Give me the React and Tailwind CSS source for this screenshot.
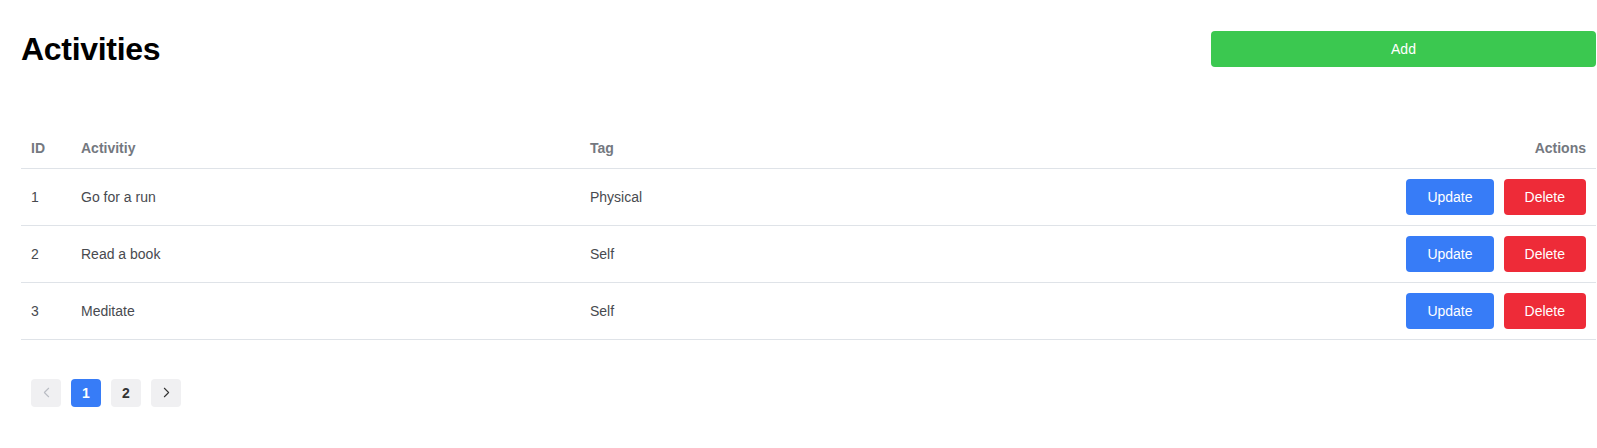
import React from 'react';
import { ChevronLeft, ChevronRight } from 'lucide-react';

const activities = [
    { id: 1, name: 'Go for a run', tag: 'Physical' },
    { id: 2, name: 'Read a book', tag: 'Self' },
    { id: 3, name: 'Meditate', tag: 'Self' },
];

const App = () => {
    return (
        <div className="min-h-screen bg-white pl-[21px] pr-[1px] pt-[31px] font-['Liberation_Sans',Arial,sans-serif]">
            {/* Header */}
            <div className="flex items-center justify-between">
                <h1 className="text-[32px] leading-9 font-bold text-black tracking-[-0.3px]">Activities</h1>
                <button className="w-[385px] h-9 rounded bg-[#3bc850] text-white text-sm">Add</button>
            </div>

            {/* Table */}
            <table className="w-full mt-[61px] border-collapse text-sm">
                <thead>
                    <tr className="h-10 border-b border-[#dfe3e8] text-left text-[#74787f] font-semibold">
                        <th className="w-[50px] px-[10px] font-semibold">ID</th>
                        <th className="w-[509px] px-[10px] font-semibold">Activitiy</th>
                        <th className="px-[10px] font-semibold">Tag</th>
                        <th className="px-[10px] text-right font-semibold">Actions</th>
                    </tr>
                </thead>
                <tbody>
                    {activities.map((a) => (
                        <tr key={a.id} className="border-b border-[#dfe3e8] text-[#484a4f]">
                            <td className="px-[10px] py-[10px]">{a.id}</td>
                            <td className="px-[10px] py-[10px]">{a.name}</td>
                            <td className="px-[10px] py-[10px]">{a.tag}</td>
                            <td className="px-[10px] py-[10px]">
                                <div className="flex justify-end gap-[10px]">
                                    <button className="h-9 px-[21px] rounded bg-[#377cf7] text-white text-sm">Update</button>
                                    <button className="h-9 px-[21px] rounded bg-[#ee2b38] text-white text-sm">Delete</button>
                                </div>
                            </td>
                        </tr>
                    ))}
                </tbody>
            </table>

            {/* Pagination */}
            <div className="flex gap-[10px] mt-[39px] ml-[10px]">
                <button className="w-[30px] h-[28px] rounded-sm bg-[#f0f0f2] flex items-center justify-center text-[#b9bcc3]">
                    <ChevronLeft size={17} strokeWidth={1.5} />
                </button>
                <button className="w-[30px] h-[28px] rounded-sm bg-[#377cf7] flex items-center justify-center text-white text-sm font-bold">1</button>
                <button className="w-[30px] h-[28px] rounded-sm bg-[#f0f0f2] flex items-center justify-center text-[#333] text-sm font-bold">2</button>
                <button className="w-[30px] h-[28px] rounded-sm bg-[#f0f0f2] flex items-center justify-center text-[#333]">
                    <ChevronRight size={17} strokeWidth={1.5} />
                </button>
            </div>
        </div>
    );
};

export default App;
